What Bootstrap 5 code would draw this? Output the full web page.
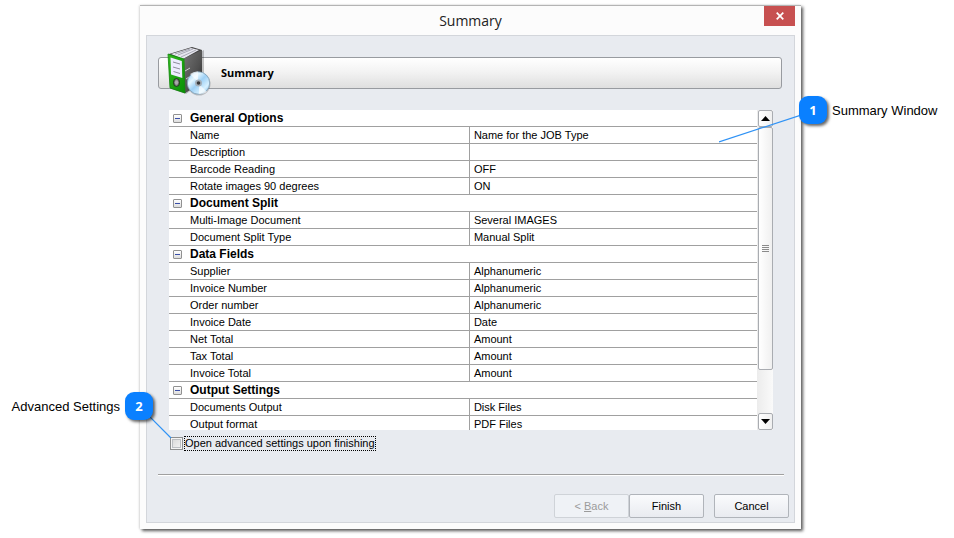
<!DOCTYPE html>
<html lang="en">
<head>
<meta charset="utf-8">
<meta name="viewport" content="width=device-width, initial-scale=1">
<title>Summary</title>
<link href="https://cdn.jsdelivr.net/npm/bootstrap@5.3.0/dist/css/bootstrap.min.css" rel="stylesheet">
<style>
body{background:#fff;color:#000;font:11px/16px "Liberation Sans",Arial,sans-serif}
.stage{padding:5px 153px 9px 140px}
.dialog{background:#fcfcfc;border-top:1px solid #b4b4b4;box-shadow:2px 2px 3px rgba(0,0,0,.65),-1px 0 2px rgba(0,0,0,.12);padding:0 6px 6px}
.titlebar{height:29px}
.titlebar h1{font:14px/30px "Open Sans",sans-serif;color:#222}
.close-box{top:0;right:0;width:31px;height:20px;background:#c75050;border:0}
.panel{background:#e8ebf0;border:1px solid #d3d6db;padding:21px 11px 4px}
.banner{height:32px;border:1px solid #989ba0;border-radius:3px;background:linear-gradient(#fff,#f3f3f3 45%,#dfdfdf);padding-left:8px;margin-right:1px}
.banner h2{font:bold 11px/30px "Open Sans",sans-serif;margin-left:9px}
.binder{width:45px;height:50px;margin:-12px 0 -8px}
.viewport{height:320px;margin:21px 10px 0 11px}
.grid{table-layout:fixed;border-collapse:separate;border-spacing:0}
.grid th,.grid td{height:17px;padding:0 0 0 4px;border-bottom:1px solid #a0a0a0;font-weight:400;line-height:16px;white-space:nowrap}
.grid tbody th{padding-left:21px}
.grid td{border-left:1px solid #a0a0a0}
.grid .section th{padding-left:4px;font-size:12px;font-weight:700}
.toggle{width:9px;height:9px;border:1px solid #919191;border-radius:1px;background:linear-gradient(#fff,#ddd);margin:0 8px 0 0}
.toggle::before{content:"";width:5px;height:1px;background:#3a4fa8}
.scrollbar{width:16px;background:linear-gradient(90deg,#ececec,#fafafa);padding-left:1px}
.scrollbar button,.thumb{border:1px solid #a9acb1;border-radius:2px;background:linear-gradient(90deg,#fff,#f0f0f0)}
.scrollbar button{height:17px}
.thumb{height:243px}
.advanced{margin:6px 12px 0;height:15px}
.advanced input{appearance:none;width:13px;height:13px;border:1px solid #8e8f8f;background:linear-gradient(135deg,#d5d5d5,#f6f6f6);box-shadow:inset 0 0 0 1px #f4f4f4,inset 0 0 0 2px #bcbfc3}
.advanced label{outline:1px dotted #000;line-height:13px;margin-left:2px}
.divider{border-top:1px solid #a0a0a0;border-bottom:1px solid #fff;margin:23px -1px 18px 0}
.actions{margin-right:-6px}
.push{width:75px;height:24px;border:1px solid #b0b4ba;border-radius:2px;background:linear-gradient(#fafbfd,#e9ebf0);color:#000;font-size:11px;line-height:14px}
.push:disabled{background:#eff2f6;border-color:#cfd3d8;color:#9b9b9b;opacity:1}
.push-apart{margin-left:10px}
.callout{font-size:13px;line-height:30px;gap:5px;white-space:nowrap}
.callout-1{left:100%;top:90px;margin-left:-2px}
.callout-2{right:100%;top:386px;margin-right:-13px}
.marker{width:28px;height:28px;border-radius:9px;background:#0a80ff;color:#fff;font:bold 13px/28px "Open Sans",sans-serif;box-shadow:2px 2px 3px rgba(0,0,0,.6)}
.leader{fill:none;stroke:#2f92f5;stroke-width:1.2}
.leader-1{right:0;top:108px}
.leader-2{left:10px;top:411px}
</style>
</head>
<body>
<main class="stage">
<div class="dialog position-relative" role="dialog" aria-labelledby="dialog-title">
  <header class="titlebar position-relative text-center">
    <h1 id="dialog-title" class="m-0">Summary</h1>
    <button type="button" class="close-box position-absolute p-0 d-flex align-items-center justify-content-center" aria-label="Close"><svg width="8" height="8" viewBox="0 0 8 8"><path d="M.7.7l6.6 6.6M7.3.7L.7 7.3" stroke="#fff" stroke-width="1.7"/></svg></button>
  </header>
  <section class="panel">
    <div class="banner d-flex align-items-center">
      <svg class="binder flex-shrink-0" viewBox="0 0 45 50" aria-hidden="true">
        <defs>
          <linearGradient id="green" x2="1" y2="1"><stop stop-color="#35b81f"/><stop offset="1" stop-color="#079005"/></linearGradient>
          <linearGradient id="dark" x2="1" y2="1"><stop stop-color="#777"/><stop offset=".6" stop-color="#505050"/><stop offset="1" stop-color="#222"/></linearGradient>
          <linearGradient id="disc" x2="1" y2="1"><stop stop-color="#8cc8f2"/><stop offset=".3" stop-color="#e5f7ff"/><stop offset=".5" stop-color="#9dd0f5"/><stop offset=".75" stop-color="#d8f1ff"/><stop offset="1" stop-color="#6eb4e8"/></linearGradient>
        </defs>
        <path d="M3 10L17 15 37 4v31L19 48 4 43z" fill="#000" opacity=".22"/>
        <path d="M2 8L25 1l10 3v32L18 47 3 42z" fill="#444"/>
        <path d="M4 8L24 2l8 2-16 9z" fill="#e7e7ef"/>
        <path d="M8 8l15-5M11 9l15-6M14 11l15-7" stroke="#999aa6" fill="none" stroke-width=".8"/>
        <path d="M16 13L35 4v32L18 47z" fill="url(#dark)"/>
        <path d="M1 8l16 5 1 34-15-5z" fill="url(#green)" stroke="#118b0c" stroke-width=".8"/>
        <path d="M3.500 11.500l11.300 3.500.5 17-11.300-3.500z" fill="#eeecff"/>
        <path d="M6 16l7 2M6 21l7 2M6.500 25.500l6.500 2" stroke="#8e8e9b" fill="none"/>
        <ellipse cx="9.500" cy="36.500" rx="3" ry="4" fill="#777" stroke="#183d15"/>
        <ellipse cx="9.500" cy="36.500" rx="1.600" ry="2.300" fill="#aaa"/>
        <path d="M18 25l5-3M19 33l3-2" stroke="#ccc"/>
        <circle cx="32" cy="38" r="11.500" fill="#000" opacity=".2"/>
        <circle cx="31.500" cy="37" r="11.200" fill="url(#disc)" stroke="#7e9db4" stroke-width=".8"/>
        <path d="M31 36L23 28q4-3 8-2.500zM32 38l8 8q-4 2.500-8 2z" fill="#fff" opacity=".65"/>
        <circle cx="31.500" cy="37" r="3.500" fill="#a5b0b9"/>
        <circle cx="31.500" cy="37" r="1.800" fill="#383838"/>
      </svg>
      <h2 class="mb-0">Summary</h2>
    </div>
    <div class="viewport d-flex overflow-hidden">
      <div class="flex-grow-1 overflow-hidden bg-white">
      <table class="grid w-100">
        <colgroup><col style="width:51%"><col></colgroup>
        <tbody>
        <tr class="section"><th colspan="2"><div class="d-flex align-items-center"><button type="button" class="toggle p-0 d-flex align-items-center justify-content-center" aria-label="Collapse General Options"></button>General Options</div></th></tr>
        <tr><th scope="row">Name</th><td>Name for the JOB Type</td></tr>
        <tr><th scope="row">Description</th><td></td></tr>
        <tr><th scope="row">Barcode Reading</th><td>OFF</td></tr>
        <tr><th scope="row">Rotate images 90 degrees</th><td>ON</td></tr>
        <tr class="section"><th colspan="2"><div class="d-flex align-items-center"><button type="button" class="toggle p-0 d-flex align-items-center justify-content-center" aria-label="Collapse Document Split"></button>Document Split</div></th></tr>
        <tr><th scope="row">Multi-Image Document</th><td>Several IMAGES</td></tr>
        <tr><th scope="row">Document Split Type</th><td>Manual Split</td></tr>
        <tr class="section"><th colspan="2"><div class="d-flex align-items-center"><button type="button" class="toggle p-0 d-flex align-items-center justify-content-center" aria-label="Collapse Data Fields"></button>Data Fields</div></th></tr>
        <tr><th scope="row">Supplier</th><td>Alphanumeric</td></tr>
        <tr><th scope="row">Invoice Number</th><td>Alphanumeric</td></tr>
        <tr><th scope="row">Order number</th><td>Alphanumeric</td></tr>
        <tr><th scope="row">Invoice Date</th><td>Date</td></tr>
        <tr><th scope="row">Net Total</th><td>Amount</td></tr>
        <tr><th scope="row">Tax Total</th><td>Amount</td></tr>
        <tr><th scope="row">Invoice Total</th><td>Amount</td></tr>
        <tr class="section"><th colspan="2"><div class="d-flex align-items-center"><button type="button" class="toggle p-0 d-flex align-items-center justify-content-center" aria-label="Collapse Output Settings"></button>Output Settings</div></th></tr>
        <tr><th scope="row">Documents Output</th><td>Disk Files</td></tr>
        <tr><th scope="row">Output format</th><td>PDF Files</td></tr>
        </tbody>
      </table>
      </div>
      <div class="scrollbar d-flex flex-column flex-shrink-0">
        <button type="button" class="p-0 d-flex align-items-center justify-content-center" aria-label="Scroll up"><svg width="9" height="5" viewBox="0 0 9 5"><path d="M0 5L4.500 0 9 5z"/></svg></button>
        <div class="thumb d-flex align-items-center justify-content-center"><svg width="7" height="7" viewBox="0 0 7 7"><path d="M0 .5h7M0 2.500h7M0 4.500h7M0 6.500h7" stroke="#8b8b8b"/></svg></div>
        <button type="button" class="mt-auto p-0 d-flex align-items-center justify-content-center" aria-label="Scroll down"><svg width="9" height="5" viewBox="0 0 9 5"><path d="M0 0L4.500 5 9 0z"/></svg></button>
      </div>
    </div>
    <div class="advanced d-flex align-items-center">
      <input type="checkbox" id="advanced" class="m-0"><label for="advanced">Open advanced settings upon finishing</label>
    </div>
    <div class="divider"></div>
    <div class="actions d-flex justify-content-end">
      <button type="button" class="push p-0" disabled>&lt; <u>B</u>ack</button>
      <button type="button" class="push p-0">Finish</button>
      <button type="button" class="push push-apart p-0">Cancel</button>
    </div>
  </section>
  <svg class="leader leader-1 position-absolute" width="82" height="30" viewBox="0 0 82 30" aria-hidden="true"><path d="M0 28L82 1"/></svg>
  <svg class="leader leader-2 position-absolute" width="22" height="22" viewBox="0 0 22 22" aria-hidden="true"><path d="M0 0L21 21"/></svg>
  <div class="callout callout-1 position-absolute d-flex align-items-start"><span class="marker text-center">1</span><span>Summary Window</span></div>
  <div class="callout callout-2 position-absolute d-flex align-items-start"><span>Advanced Settings</span><span class="marker text-center">2</span></div>
</div>
</main>
<script src="https://cdn.jsdelivr.net/npm/bootstrap@5.3.0/dist/js/bootstrap.bundle.min.js"></script>
</body>
</html>
